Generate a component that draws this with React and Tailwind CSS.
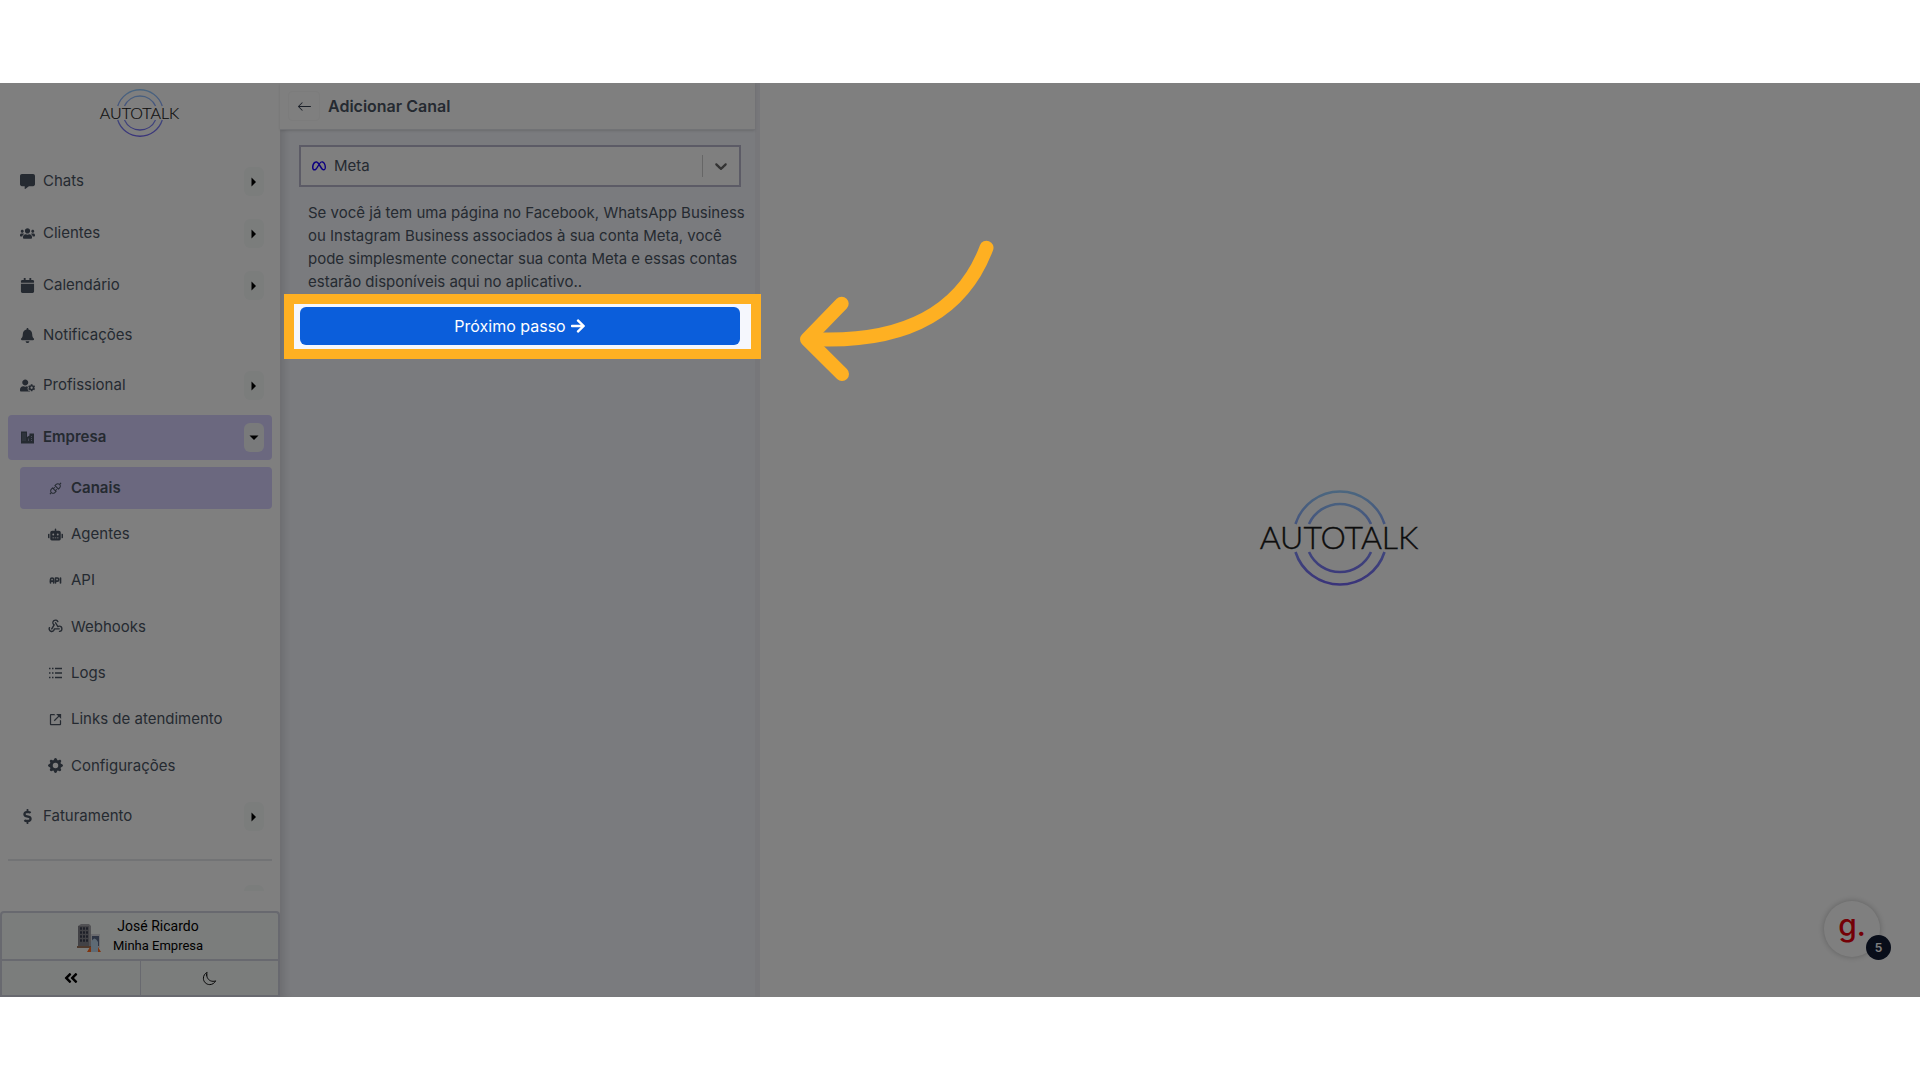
import { useState } from 'react'
import {
  FaCommentAlt,
  FaUsers,
  FaCalendar,
  FaBell,
  FaUserCog,
  FaRobot,
  FaArrowRight,
  FaAngleDoubleLeft,
  FaDollarSign
} from 'react-icons/fa'
import { FaMeta } from 'react-icons/fa6'
import { BsArrowLeft, BsGearFill } from 'react-icons/bs'
import { AiOutlineApi } from 'react-icons/ai'
import { TbApi } from 'react-icons/tb'
import { PiWebhooksLogoBold } from 'react-icons/pi'
import { BiLinkExternal } from 'react-icons/bi'
import { IoMoonOutline } from 'react-icons/io5'

const mainItems = [
  { label: 'Chats', icon: FaCommentAlt, expandable: true },
  { label: 'Clientes', icon: FaUsers, expandable: true },
  { label: 'Calendário', icon: FaCalendar, expandable: true },
  { label: 'Notificações', icon: FaBell, expandable: false },
  { label: 'Profissional', icon: FaUserCog, expandable: true }
]

const companyItems = [
  { label: 'Canais', icon: AiOutlineApi },
  { label: 'Agentes', icon: FaRobot },
  { label: 'API', icon: ApiIcon },
  { label: 'Webhooks', icon: PiWebhooksLogoBold },
  { label: 'Logs', icon: LogsIcon },
  { label: 'Links de atendimento', icon: BiLinkExternal },
  { label: 'Configurações', icon: BsGearFill }
]

function ApiIcon({ className }) {
  return <TbApi className={className} strokeWidth={2.6} />
}

function LogsIcon({ className }) {
  return (
    <svg viewBox="0 0 15 15" className={className} fill="none" stroke="currentColor" strokeWidth="1.3">
      <path d="M1 2.500H2.500M4 2.500H5.500M7 2.500H14M1 7H2.500M4 7H5.500M7 7H14M1 11.500H2.500M4 11.500H5.500M7 11.500H14" />
    </svg>
  )
}

function CompanyIcon({ className }) {
  return (
    <svg viewBox="0 0 15 15" className={className}>
      <path d="M1 1.500H7V7L9.500 5.500V3.500H14V13.500H1Z" fill="currentColor" />
      <path d="M3 3.500V11M5 3.500V11M11.500 6V11" stroke="#d6d0ff" strokeOpacity="0.7" strokeWidth="0.8" strokeDasharray="1 1" />
      <path d="M8.500 8.500V11" stroke="#d6d0ff" strokeOpacity="0.6" strokeWidth="0.8" />
    </svg>
  )
}

function Logo({ id, className }) {
  return (
    <svg viewBox="0 0 160 96" className={className} role="img" aria-label="Autotalk">
      <defs>
        <linearGradient id={id} gradientUnits="userSpaceOnUse" x1="0" y1="0" x2="0" y2="96">
          <stop offset="0" stopColor="#96ccff" />
          <stop offset="1" stopColor="#7264f4" />
        </linearGradient>
      </defs>
      <g fill="none" stroke={`url(#${id})`} strokeWidth="2.6">
        <path d="M35.500 32A46.700 46.700 0 0 1 124.500 32" />
        <path d="M49 32A34 34 0 0 1 111 32" />
        <path d="M35.500 60A46.700 46.700 0 0 0 124.500 60" />
        <path d="M49 60A34 34 0 0 0 111 60" />
      </g>
      <text
        x="79"
        y="57"
        textAnchor="middle"
        fontFamily="Lato, sans-serif"
        fontWeight="300"
        fontSize="32"
        fill="#1a1a1a"
        stroke="#1a1a1a"
        strokeWidth="0.4"
      >
        AUTOTALK
      </text>
    </svg>
  )
}

function ExpandButton({ label, open }) {
  return (
    <button
      aria-label={`Expandir ${label}`}
      aria-expanded={Boolean(open)}
      className={`flex h-[29px] w-5 items-center justify-center rounded-md ${open ? 'bg-[#f3f4f6]' : 'bg-[#f7faf9]'}`}
    >
      <svg viewBox="0 0 10 10" className={`size-[10px] ${open ? 'rotate-90' : ''}`}>
        <path d="M2.500 0.500L7 5L2.500 9.500Z" fill="#000" />
      </svg>
    </button>
  )
}

function MenuItem({ label, icon: Icon, expandable, open }) {
  return (
    <li
      className={`flex items-center rounded-sm pr-2 pl-3 ${expandable ? 'h-[45px]' : 'h-[41px]'} ${open ? 'bg-[#d6d0ff] font-semibold' : ''}`}
    >
      <a href="#" className="flex flex-1 items-center gap-2">
        <Icon className="size-[15px]" />
        {label}
      </a>
      {expandable && <ExpandButton label={label} open={open} />}
    </li>
  )
}

function Sidebar() {
  return (
    <aside className="flex w-[280px] shrink-0 flex-col bg-white">
      <div className="flex h-[76px] shrink-0 justify-center pt-[7px]">
        <Logo id="logo-small" className="h-12 w-20 overflow-visible" />
      </div>

      <nav className="min-h-0 flex-1 overflow-hidden px-2 text-[15px] text-[#4b5563]">
        <ul className="flex flex-col gap-[7px]">
          {mainItems.map((item) => (
            <MenuItem key={item.label} {...item} />
          ))}
          <MenuItem label="Empresa" icon={CompanyIcon} expandable open />
          <li>
            <ul className="flex h-80 flex-col justify-between pl-3">
              {companyItems.map(({ label, icon: Icon }) => (
                <li
                  key={label}
                  className={`flex h-[42px] items-center rounded-sm pl-7 ${label === 'Canais' ? 'bg-[#d6d0ff] font-semibold' : ''}`}
                >
                  <a href="#" className="flex flex-1 items-center gap-2">
                    <Icon className="size-[15px]" />
                    {label}
                  </a>
                </li>
              ))}
            </ul>
          </li>
          <MenuItem label="Faturamento" icon={FaDollarSign} expandable />
        </ul>
        <hr className="mt-5 border-t-2 border-[#e5e7eb]" />
        <div className="flex justify-end pt-6 pr-2">
          <ExpandButton label="Mais" />
        </div>
      </nav>

      <footer className="mt-5 shrink-0 rounded-t-sm border-2 border-b-0 border-[#d0d3df] bg-[#f7faf9] font-[Roboto,sans-serif] text-black">
        <div className="flex h-[46px] items-center justify-center gap-3">
          <CompanyAvatar />
          <div className="text-center">
            <p className="text-[14px] leading-5">José Ricardo</p>
            <p className="text-[13px] leading-5">Minha Empresa</p>
          </div>
        </div>
        <div className="flex h-[38px] border-y-2 border-[#d0d3df]">
          <button aria-label="Recolher menu" className="flex flex-1 items-center justify-center border-r border-[#d0d3df]">
            <FaAngleDoubleLeft className="size-4" />
          </button>
          <button aria-label="Modo escuro" className="flex flex-1 items-center justify-center">
            <IoMoonOutline className="size-[15px]" />
          </button>
        </div>
      </footer>
    </aside>
  )
}

function CompanyAvatar() {
  return (
    <svg viewBox="0 0 24 30" className="mt-1 h-[30px] w-6" aria-hidden="true">
      <path d="M1 3L4 1H12L14 3V25H1Z" fill="#a5a5aa" />
      <path d="M1 3H12V23H1Z" fill="#85858c" />
      <path d="M3 5.500H11M3 9.500H11M3 13.500H11M3 17.500H11" stroke="#3d4152" strokeWidth="2.4" strokeDasharray="2 1" />
      <path d="M0 23H14V25H0Z" fill="#9a755c" />
      <path d="M14 11H23V25H14Z" fill="#d9d9de" />
      <path d="M15 13H22V23H15Z" fill="#5b6888" />
      <path d="M10 29L13 24H21L24 29Z" fill="#ff6a1e" />
      <path d="M14 29V19Q17.500 12 21 19V29Z" fill="#bcd4e8" />
    </svg>
  )
}

function HighlightedButton() {
  return (
    <div className="relative mx-px">
      <button className="flex h-[38px] w-full items-center justify-center gap-1 rounded-md bg-[#0b5edb] text-base text-white">
        Próximo passo
        <FaArrowRight className="size-4" />
      </button>
      {/* the spread shadow dims everything outside the focused step */}
      <div className="pointer-events-none absolute -top-[13px] -right-[21px] -bottom-[14px] -left-4 z-20 border-10 border-[#feb022] shadow-[0_0_0_9999px_rgba(0,0,0,0.5)]" />
      <svg
        viewBox="0 0 240 180"
        className="pointer-events-none absolute -top-[87px] left-[480px] z-30 h-[180px] w-60"
        fill="none"
        stroke="#feb022"
        strokeWidth="14"
        strokeLinecap="round"
        strokeLinejoin="round"
      >
        <path d="M206.500 27.700C182 93 124 124 30 119" />
        <path d="M61.700 83.700L27 119.300L62 154" />
      </svg>
    </div>
  )
}

function ChannelPanel() {
  const [channel, setChannel] = useState('meta')

  return (
    <section className="w-[480px] shrink-0 border-r-5 border-[#eeeef4] bg-[#f5f7fd] shadow-[inset_8px_0_8px_-4px_rgba(0,0,0,0.12)]">
      <header className="flex h-[47px] items-center gap-2 border-b border-[#e2e4ea] bg-white pl-2 shadow-sm">
        <button aria-label="Voltar" className="flex h-[30px] w-8 items-center justify-center rounded-sm border border-[#f8f8f8]">
          <BsArrowLeft className="size-[15px] text-[#374151]" />
        </button>
        <h1 className="text-base font-semibold text-[#4b5563]">Adicionar Canal</h1>
      </header>

      <div className="pt-[15px] pr-[14px] pl-[19px] text-[15px] text-[#4b5563]">
        <div className="relative">
          <select
            aria-label="Canal"
            value={channel}
            onChange={(e) => setChannel(e.target.value)}
            className="h-[42px] w-full appearance-none border-2 border-[#b9b7cc] bg-white pl-[33px] outline-none"
          >
            <option value="meta">Meta</option>
          </select>
          <FaMeta className="pointer-events-none absolute top-[14px] left-[13px] size-[14px] text-[#1a00ff]" />
          <div className="pointer-events-none absolute top-[10px] right-0 flex h-[22px] w-[39px] items-center justify-center border-l border-[#cccccc] pr-0.5">
            <svg viewBox="0 0 20 20" className="size-5" fill="#666666">
              <path d="M4.516 7.548c0.436-0.446 1.043-0.481 1.576 0l3.908 3.747 3.908-3.747c0.533-0.481 1.141-0.446 1.574 0 0.436 0.445 0.408 1.197 0 1.615-0.406 0.418-4.695 4.502-4.695 4.502-0.217 0.223-0.502 0.335-0.787 0.335s-0.570-0.112-0.789-0.335c0 0-4.287-4.084-4.695-4.502s-0.436-1.170 0-1.615z" />
            </svg>
          </div>
        </div>

        <p className="-mr-2 mt-[14px] mb-[14px] pl-[9px] leading-[23px]">
          Se você já tem uma página no Facebook, WhatsApp Business ou Instagram Business associados à sua conta
          Meta, você pode simplesmente conectar sua conta Meta e essas contas estarão disponíveis aqui no
          aplicativo..
        </p>

        <HighlightedButton />
      </div>
    </section>
  )
}

function HelpBubble() {
  return (
    <div className="absolute right-10 bottom-10">
      <button
        aria-label="Abrir guia"
        className="flex size-14 items-center justify-center rounded-full bg-white pb-2 text-[30px] leading-none font-medium text-[#e8000c] shadow-[0_0_6px_rgba(0,0,0,0.25)]"
      >
        g.
      </button>
      <span className="absolute -right-[11px] -bottom-[3px] flex size-[25px] items-center justify-center rounded-full bg-[#101b33] text-xs font-semibold text-white">
        5
      </span>
    </div>
  )
}

function App() {
  return (
    <div className="h-screen bg-white py-[83px] font-[Inter,sans-serif]">
      <div className="relative flex h-full overflow-hidden bg-white">
        <Sidebar />
        <ChannelPanel />
        <main className="flex flex-1 items-center justify-center">
          <Logo id="logo-large" className="h-24 w-40 overflow-visible" />
        </main>
        <HelpBubble />
      </div>
    </div>
  )
}

export default App
